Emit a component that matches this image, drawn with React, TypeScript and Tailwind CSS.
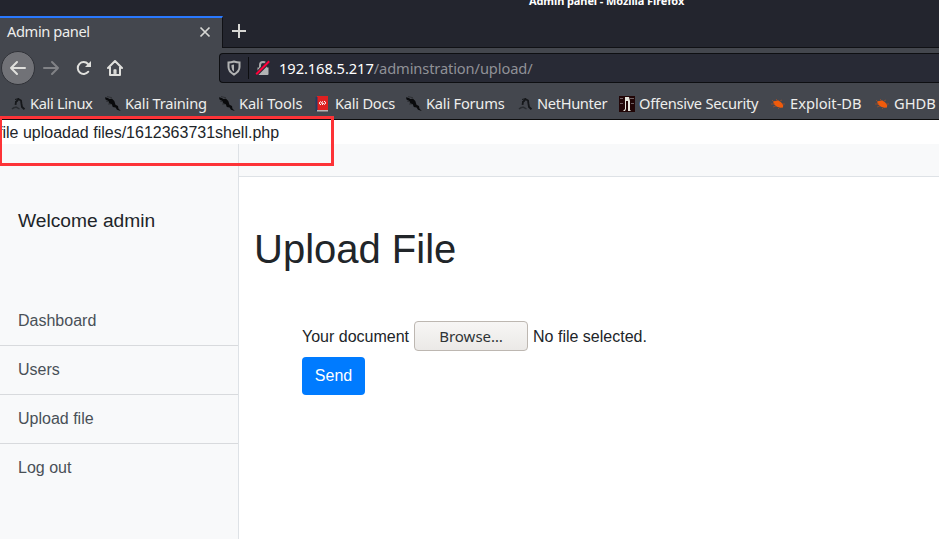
import React from "react";

const Dragon = () => (
  <svg width="16" height="16" viewBox="0 0 16 16" className="shrink-0">
    <path d="M5.5 8.8 6 5.8 8.5 3.2 11 4.5 11.5 8 12 11 14.5 13.2" fill="none" stroke="#15171a" strokeWidth="1.8" />
    <path d="M5 3.5 9 2.5M8 4.8 5 6" stroke="#15171a" strokeWidth="1" />
    <path d="M2 13Q4 11 6.5 11.3L9.5 13" stroke="#292c30" strokeWidth="1.4" fill="none" />
  </svg>
);

const Knife = () => (
  <svg width="16" height="16" viewBox="0 0 16 16" className="shrink-0">
    <path d="M0 1.2 3 2 4.2 3 7 2.7 9.3 5 10.5 8.8 13 10 13.4 12.5 15.8 15 12 13.8 10.6 11.6 7.8 11 6.8 8.3 4.6 7.8 3.4 5 .5 3.5Z" fill="#090a0c" />
    <path d="M2 .5 7 1.8M1 5 4 6M3 8 6 8" stroke="#292b2e" strokeWidth=".8" />
  </svg>
);

const Docs = () => (
  <svg width="16" height="16" viewBox="0 0 16 16" className="shrink-0">
    <path d="M2 0h11v14H2z" fill="#df2020" />
    <path d="M.5 1h2v14h-2z" fill="#263b62" />
    <path d="M2 14h11v1.5H2z" fill="#b9b2b2" />
    <path d="M6 5.4 4 7.2 6 9M9 5 11 6.8 9 8.7M8 5.3 6.2 7 8.7 7.4 7 9" fill="none" stroke="#fff" strokeWidth="1" />
  </svg>
);

const Security = () => (
  <svg width="16" height="16" viewBox="0 0 16 16" className="shrink-0">
    <path d="M0 0h16v16H0z" fill="#210607" />
    <path d="M1 2h3v1H1zM11 2h4v1h-4zM1 7h3v1H1zM12 7h3v1h-3z" fill="#716264" />
    <path d="M6 1h4l1 4v9l1 1H9V5H7v8l-1 2H4l2-2Z" fill="#e5e5dc" />
  </svg>
);

const Bug = () => (
  <svg width="16" height="16" viewBox="0 0 16 16" className="shrink-0">
    <path d="M3 5.2 5.5 5 8 4.3 11 6.3 13.2 8.7 13 11.5 10.5 11.7 7 10.8 4 8.5Z" fill="#f05b0b" />
    <path d="M4 6 2 4M8 5 6 3M10 5 12 4M12 8 15 8M5 8 1 8M6 10 3 11M10 11 8 13" stroke="#9c4f2c" strokeWidth=".8" />
  </svg>
);

const bookmarks = [
  { name: "Kali Linux", Icon: Dragon, width: "w-[95px]", tracking: "tracking-[-0.35px]" },
  { name: "Kali Training", Icon: Knife, width: "w-[114px]", tracking: "tracking-[-0.23px]" },
  { name: "Kali Tools", Icon: Knife, width: "w-[96px]", tracking: "tracking-[-0.1px]" },
  { name: "Kali Docs", Icon: Docs, width: "w-[91px]", tracking: "tracking-[-0.25px]" },
  { name: "Kali Forums", Icon: Knife, width: "w-[111px]", tracking: "tracking-[-0.23px]" },
  { name: "NetHunter", Icon: Dragon, width: "w-[102px]", tracking: "tracking-[-0.35px]" },
  { name: "Offensive Security", Icon: Security, width: "w-[151px]", tracking: "tracking-[-0.28px]" },
  { name: "Exploit-DB", Icon: Bug, width: "w-[104px]", tracking: "" },
  { name: "GHDB", Icon: Bug, width: "w-[70px]", tracking: "" },
];

function Browser() {
  return (
    <header className="h-[120px] shrink-0 border-b border-[#0c0c0d] bg-[#44474e] font-['Noto_Sans',sans-serif] text-[14.67px] text-[#eeeeec]">
      <div className="relative flex h-12 border-b border-[#101115] bg-[#23252e]">
        <div className="absolute top-[-7px] left-[529px] text-[11px] leading-4 font-bold tracking-[-0.1px] whitespace-nowrap text-white">Admin panel - Mozilla Firefox</div>
        <div className="mt-4 -mb-px flex h-8 w-[223px] items-center border-t-2 border-r border-t-[#2979ff] border-r-[#101115] bg-[#44474e] pl-[7px]">
          <span className="mb-1 w-[192px] leading-5 tracking-[-0.4px]">Admin panel</span>
          <svg className="mb-0.5" width="12" height="12" viewBox="0 0 12 12" stroke="#d7d7d4" strokeWidth="1.7"><path d="m1.5 1.5 9 9m0-9-9 9" /></svg>
        </div>
        <svg className="mt-6 ml-[9px]" width="14" height="14" viewBox="0 0 14 14" stroke="#d7d7d4" strokeWidth="2"><path d="M7 0v14M0 7h14" /></svg>
      </div>
      <div className="flex h-10 items-center pl-px">
        <div className="flex size-[34px] items-center justify-center rounded-full border border-[#303238] bg-[#717277]">
          <svg width="18" height="18" viewBox="0 0 18 18" fill="none" stroke="#e0e0dd" strokeWidth="2" strokeLinecap="round" strokeLinejoin="round"><path d="M16 9H2m6-6L2 9l6 6" /></svg>
        </div>
        <svg className="ml-[7px]" width="18" height="18" viewBox="0 0 18 18" fill="none" stroke="#818286" strokeWidth="2" strokeLinecap="round" strokeLinejoin="round"><path d="M2 9h14m-6-6 6 6-6 6" /></svg>
        <svg className="ml-4" width="16" height="16" viewBox="0 0 16 16" fill="none" stroke="#e0e0dd" strokeWidth="2" strokeLinecap="round"><path d="M12 4A5.9 5.9 0 1 0 12.3 11.7" /><path d="M15 1v6H9Z" fill="#e0e0dd" stroke="none" /></svg>
        <svg className="ml-[15px]" width="16" height="16" viewBox="0 0 16 16" fill="none" stroke="#e0e0dd" strokeWidth="2" strokeLinejoin="round" strokeLinecap="round"><path d="m1 8 7-7 7 7M3 7v8h10V7" /><path d="M7.2 13.5V10h1.6v3.5" strokeWidth="1.5" /></svg>
        <div className="ml-24 flex h-[30px] flex-1 items-center rounded-l border border-r-0 border-[#0e0f12] bg-[#282a35] pl-[7px]">
          <svg width="14" height="16" viewBox="0 0 14 16"><path d="M1.5 2.5Q4 2.3 7 1.5 10 2.3 12.5 2.5V7Q12.5 11.5 7 14.5 1.5 11.5 1.5 7Z" fill="none" stroke="#b2b3b4" strokeWidth="2" /><path d="M7 4.5v7.3Q4.5 9.7 4.5 7V5Z" fill="#b2b3b4" /></svg>
          <div className="ml-[7px] h-[22px] w-px bg-[#0d0e11]" />
          <svg className="ml-[6px]" width="16" height="16" viewBox="0 0 16 16"><path d="M5 8V5a3 3 0 0 1 6 0v3" fill="none" stroke="#a9aaaa" strokeWidth="2" /><path d="M2.5 7.5h11V14a1 1 0 0 1-1 1h-9a1 1 0 0 1-1-1Z" fill="#b2b3b4" /><path d="M1.2 14.3 14.2 1.3" stroke="#282a35" strokeWidth="4" /><path d="M1.2 14.3 14.2 1.3" stroke="#ff0039" strokeWidth="2" /></svg>
          <span className="ml-[8px] tracking-[-0.07px] text-white">192.168.5.217</span><span className="tracking-[-0.12px] text-[#909197]">/adminstration/upload/</span>
        </div>
      </div>
      <nav className="flex h-[31px] items-center overflow-hidden pl-[10px] whitespace-nowrap">
        {bookmarks.map(({ name, Icon, width, tracking }) => (
          <div key={name} className={`flex shrink-0 items-center gap-1 ${width}`}><Icon /><span className={`mb-0.5 ${tracking}`}>{name}</span></div>
        ))}
      </nav>
    </header>
  );
}

export default function App() {
  return (
    <div className="relative flex h-[539px] w-[939px] flex-col overflow-hidden bg-white font-['Liberation_Sans',sans-serif] text-base text-[#212529]">
      <Browser />
      <div className="-ml-0.5 h-6 shrink-0 pt-px leading-6">file uploadad files/1612363731shell.php</div>
      <div className="flex flex-1">
        <aside className="w-[239px] border-r border-[#dee2e6] bg-[#f8f9fa]">
          <div className="h-[152px] pt-[62px] pl-[18px] text-[19.2px] leading-[29px]">Welcome admin</div>
          <nav className="text-[#495057]">
            {["Dashboard", "Users", "Upload file", "Log out"].map((item) => (
              <div key={item} className="h-[49px] border-b border-[#d8dadd] pt-3 pl-[18px] leading-6 first:h-[50px] first:pt-[13px] last:border-0">{item}</div>
            ))}
          </nav>
        </aside>
        <main className="flex-1">
          <div className="h-[33px] border-b border-[#dee2e6] bg-[#f8f9fa]" />
          <div className="pt-12 pl-[15px]">
            <h1 className="text-[40px] leading-[48px] font-medium">Upload File</h1>
            <div className="mt-12 ml-12">
              <div className="flex h-[30px] items-center">
                <span className="pt-0.5">Your document</span>
                <button className="ml-[5px] h-[30px] w-[114px] rounded border border-[#bdb7b1] bg-linear-to-b from-[#f7f6f5] to-[#ebe9e7] font-['Noto_Sans',sans-serif] text-[15px] text-[#2e3436]">Browse…</button>
                <span className="ml-[5px] pt-0.5">No file selected.</span>
              </div>
              <button className="mt-[6px] h-[38px] w-[63px] rounded bg-[#007bff] text-white">Send</button>
            </div>
          </div>
        </main>
      </div>
      <div className="pointer-events-none absolute top-[116px] left-[-1px] h-[50px] w-[335px] border-[3px] border-[#fd3337]" />
    </div>
  );
}
